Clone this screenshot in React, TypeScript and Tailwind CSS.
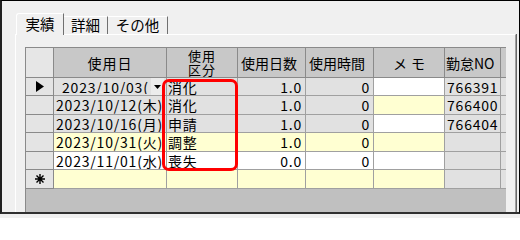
import React from "react";

type CellBg = "g" | "w" | "y";

type Row = {
  mark: "arrow" | "new" | "";
  date: string;
  editing?: boolean;
  kubun: string;
  days: string;
  time: string;
  no: string;
  bg: CellBg[]; // date, kubun, days, time, memo
  h: string;
};

const rows: Row[] = [
  { mark: "arrow", date: "2023/10/03(", editing: true, kubun: "消化", days: "1.0", time: "0", no: "766391", bg: ["g", "g", "g", "g", "w"], h: "h-[18px]" },
  { mark: "", date: "2023/10/12(木)", kubun: "消化", days: "1.0", time: "0", no: "766400", bg: ["g", "g", "g", "g", "y"], h: "h-[19px]" },
  { mark: "", date: "2023/10/16(月)", kubun: "申請", days: "1.0", time: "0", no: "766404", bg: ["g", "g", "g", "g", "w"], h: "h-[18px]" },
  { mark: "", date: "2023/10/31(火)", kubun: "調整", days: "1.0", time: "0", no: "", bg: ["y", "y", "y", "y", "y"], h: "h-[19px]" },
  { mark: "", date: "2023/11/01(水)", kubun: "喪失", days: "0.0", time: "0", no: "", bg: ["w", "w", "w", "w", "w"], h: "h-[18px]" },
  { mark: "new", date: "", kubun: "", days: "", time: "", no: "", bg: ["y", "y", "y", "y", "y"], h: "h-[19px]" },
];

const bgClass: Record<CellBg, string> = {
  g: "bg-[#e1e1e1]",
  w: "bg-white",
  y: "bg-[#ffffd2]",
};

const line = "border-r border-b border-[#a0a0a0]";
const head = "bg-[#c8c8c8] border-r border-b border-[#8a8a8a]";

function RowMark({ mark }: { mark: Row["mark"] }) {
  if (mark === "arrow")
    return (
      <svg width="8" height="11" viewBox="0 0 8 11">
        <path d="M0 0 L8 5.5 L0 11 Z" fill="#000" />
      </svg>
    );
  if (mark === "new")
    return (
      <svg width="10" height="10" viewBox="0 0 10 10" stroke="#000" strokeWidth="1.4">
        <path d="M5 0 V10 M0 5 H10 M1.5 1.5 L8.5 8.5 M8.5 1.5 L1.5 8.5" />
      </svg>
    );
  return null;
}

function Tab({ label, active, w }: { label: string; active?: boolean; w: string }) {
  return active ? (
    <div className={`relative z-10 ${w} h-[22px] -mb-px bg-[#f0f0f0] border-t border-l border-white border-r border-r-[#707070] rounded-tl-[3px] flex items-center justify-center text-[14.5px] leading-none`}>
      {label}
    </div>
  ) : (
    <div className={`${w} h-[18px] bg-[#f0f0f0] border-t border-white border-r border-r-[#707070] flex items-center justify-center text-[14.5px] leading-none`}>
      {label}
    </div>
  );
}

export default function App() {
  return (
    <div className="relative w-[520px] h-[218px] bg-[#f0f0f0] text-black font-['Noto_Sans_CJK_JP',sans-serif]">
      <div className="h-[214px] flex flex-col border-t border-l-2 border-r border-b-2 border-t-black border-l-[#202020] border-r-black border-b-[#303030] pt-[12px] pl-[13px] pr-[3px]">
        {/* tabs */}
        <div className="flex items-end h-[21px] pl-[1px]">
          <Tab label="実績" active w="w-[48px]" />
          <Tab label="詳細" w="w-[44px]" />
          <Tab label="その他" w="w-[60px]" />
        </div>

        {/* tab page */}
        <div className="flex-1 flex flex-col border-t border-l border-white border-r border-r-[#a0a0a0] shadow-[1px_0_0_#696969] pl-[9px] pt-[12px]">
          <div className="w-[481px] flex-1 flex flex-col bg-[#c0c0c0] border-t border-l border-[#8a8a8a] text-[14px] leading-none">
            {/* header */}
            <div className="flex h-[30px] shrink-0">
              <div className="w-[28px] bg-[#e6e6e6] border-r border-b border-[#8a8a8a]" />
              <div className={`w-[113px] ${head} flex items-center justify-center tracking-[1px]`}>使用日</div>
              <div className={`w-[71px] ${head} flex flex-col items-center justify-center text-[13px] leading-[14px] tracking-[1px]`}>
                <span>使用</span>
                <span>区分</span>
              </div>
              <div className={`w-[68px] ${head} flex items-center pl-[3px] whitespace-nowrap overflow-hidden`}>使用日数</div>
              <div className={`w-[68px] ${head} flex items-center pl-[3px] whitespace-nowrap overflow-hidden`}>使用時間</div>
              <div className={`w-[71px] ${head} flex items-center justify-center tracking-[4px] pl-[4px]`}>メモ</div>
              <div className={`w-[56px] ${head} flex items-center pl-[1px] whitespace-nowrap overflow-hidden`}>勤怠NO</div>
              <div className="w-[5px] bg-[#c8c8c8] border-b border-[#8a8a8a]" />
            </div>

            {/* rows */}
            {rows.map((r, i) => (
              <div key={i} className={`flex shrink-0 tracking-[0.8px] ${r.h}`}>
                <div className="w-[28px] bg-[#e4e4e4] border-r border-b border-[#8a8a8a] flex items-center justify-center">
                  <RowMark mark={r.mark} />
                </div>
                {r.editing ? (
                  <div className={`w-[113px] ${bgClass[r.bg[0]]} ${line} flex items-center pl-[8px] pr-[2px]`}>
                    <span className="flex-1 overflow-hidden whitespace-nowrap">{r.date}</span>
                    <div className="w-[13px] h-full bg-[#ececec] flex items-center justify-center">
                      <svg width="7" height="4" viewBox="0 0 7 4">
                        <path d="M0 0 H7 L3.5 4 Z" fill="#000" />
                      </svg>
                    </div>
                  </div>
                ) : (
                  <div className={`w-[113px] ${bgClass[r.bg[0]]} ${line} flex items-center pl-[2px] whitespace-nowrap overflow-hidden`}>{r.date}</div>
                )}
                <div className={`w-[71px] ${bgClass[r.bg[1]]} ${line} flex items-center pl-[1px]`}>{r.kubun}</div>
                <div className={`w-[68px] ${bgClass[r.bg[2]]} ${line} flex items-center justify-end pr-[3px]`}>{r.days}</div>
                <div className={`w-[68px] ${bgClass[r.bg[3]]} ${line} flex items-center justify-end pr-[3px]`}>{r.time}</div>
                <div className={`w-[71px] ${bgClass[r.bg[4]]} ${line}`} />
                <div className={`w-[56px] bg-[#e1e1e1] ${line} flex items-center pl-[2px]`}>{r.no}</div>
                <div className="w-[5px] bg-[#e1e1e1] border-b border-[#a0a0a0]" />
              </div>
            ))}
          </div>
        </div>
      </div>

      {/* highlight around 使用区分 */}
      <div className="absolute left-[162px] top-[79px] w-[76px] h-[92px] border-[3px] border-[#ff0000] rounded-[7px] pointer-events-none" />
    </div>
  );
}
